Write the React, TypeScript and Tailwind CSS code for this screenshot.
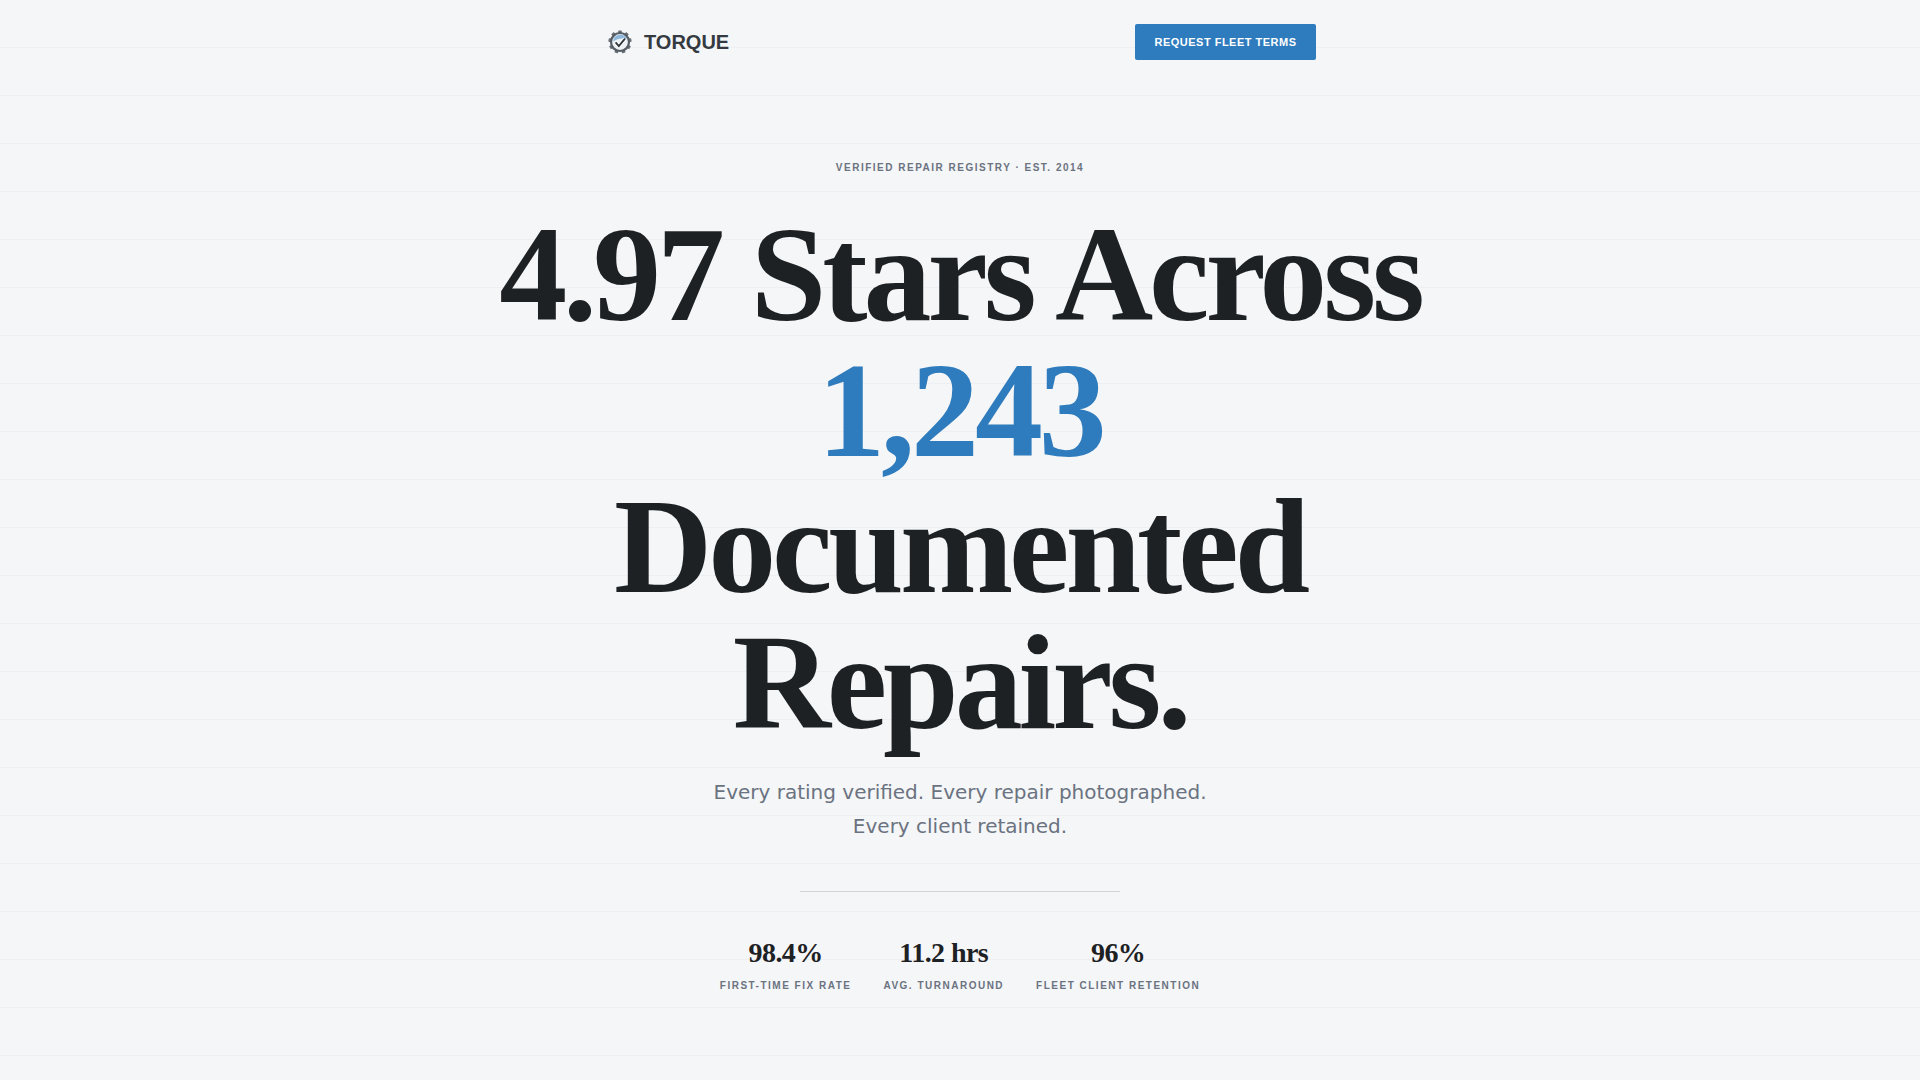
export default function App() {
  const sans = "font-['Liberation_Sans',Arial,sans-serif]";
  const serif = "font-['Liberation_Serif','Times_New_Roman',serif]";
  const stats = [
    ["98.4%", "FIRST-TIME FIX RATE"],
    ["11.2 hrs", "AVG. TURNAROUND"],
    ["96%", "FLEET CLIENT RETENTION"],
  ];
  const teeth = [0, 40, 80, 120, 160, 200, 240, 280, 320];
  return (
    <div className={`relative min-h-[1080px] overflow-hidden bg-[#f4f6f8] bg-[repeating-linear-gradient(180deg,transparent,transparent_47px,#edeff2_47px,#edeff2_48px)] ${sans}`}>
      <nav className="mx-auto flex h-[84px] w-[720px] items-center justify-between pl-[8px] pr-[4px]">
        <div className="flex items-center gap-3">
          <svg width="24" height="24" viewBox="0 0 24 24" fill="none">
            {teeth.map((a) => (
              <rect key={a} x="10.2" y="0.4" width="3.6" height="4.2" rx="0.6" fill="#6a7077" transform={`rotate(${a} 12 12)`} />
            ))}
            <circle cx="12" cy="12" r="9" fill="#eef1f4" stroke="#565c63" strokeWidth="2.2" />
            <path d="M5.2 11.4a6.9 6.9 0 0 1 13.4-2.2c-3.4-1.4-9.4-1-13.4 2.2z" fill="#8fb8dc" />
            <path d="M7.6 12.4l3.2 3.6L17 8.6" stroke="#ffffff" strokeWidth="3.2" />
            <path d="M7.6 12.4l3.2 3.6L17 8.6" stroke="#2f3338" strokeWidth="1.8" />
          </svg>
          <span className="text-[20px] font-bold tracking-[0px] text-[#343a40]">TORQUE</span>
        </div>
        <button className="h-9 w-[181px] rounded-[2px] bg-[#2e7bbd] text-[11px] font-bold tracking-[0.5px] text-white">REQUEST FLEET TERMS</button>
      </nav>
      <main className="flex flex-col items-center pt-[76px]">
        <p className="text-[10px] font-bold leading-[16px] tracking-[1.5px] text-[#6b7280]">VERIFIED REPAIR REGISTRY · EST. 2014</p>
        <h1 className={`mt-[30px] text-center text-[136px] font-bold leading-[136px] tracking-[-4.08px] text-[#1e2124] ${serif}`}>
          <div>4.97 Stars Across</div>
          <div className="text-[#2e7bbd]">1,243</div>
          <div>Documented</div>
          <div>Repairs.</div>
        </h1>
        <p className="mt-[25px] text-center font-['DejaVu_Sans',sans-serif] text-[20px] leading-[34px] text-[#6b7280]">
          Every rating verified. Every repair photographed.<br />Every client retained.
        </p>
        <div className="mt-[48px] h-px w-[320px] bg-[#d1d5db]" />
        <div className="mt-[43px] flex gap-[32px]">
          {stats.map(([v, l]) => (
            <div key={l} className="flex flex-col items-center">
              <span className={`text-[28px] font-bold leading-[36px] tracking-[-0.56px] text-[#1e2124] ${serif}`}>{v}</span>
              <span className="mt-[8px] text-[10px] font-bold leading-[14px] tracking-[1.5px] text-[#6b7280]">{l}</span>
            </div>
          ))}
        </div>
      </main>
    </div>
  );
}
